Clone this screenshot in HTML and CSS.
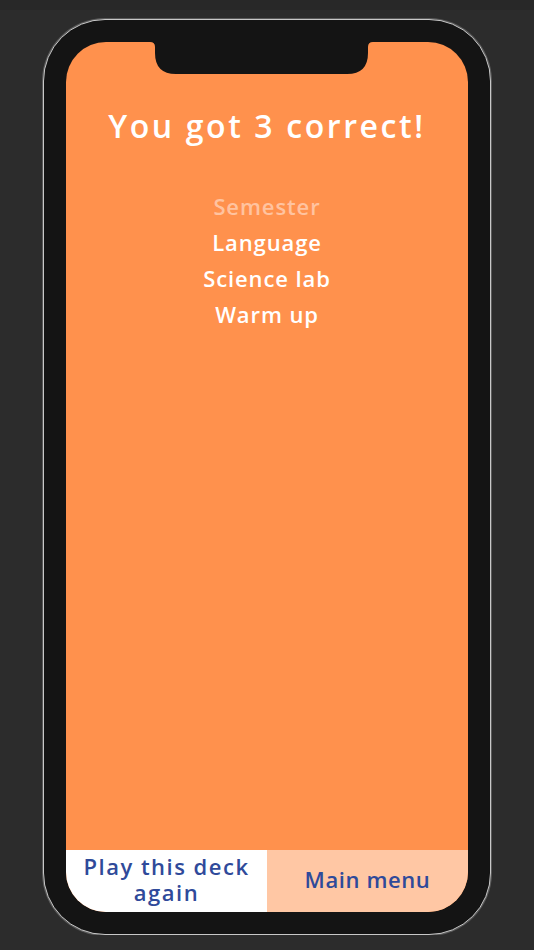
FILE: index.html
```html
<!DOCTYPE html>
<html>
<head>
  <title>Results</title>
  <link rel="stylesheet" href="styles.css">
</head>
<body>
  <div class="topbar"></div>
  <div id="phone">
    <div id="screen">
      <svg class="notch" width="223" height="33" viewBox="0 0 223 33">
        <path d="M0 0 H223 Q218 0 218 5 V11 Q218 32 197 32 H26 Q5 32 5 11 V5 Q5 0 0 0 Z" fill="#141414"/>
      </svg>
      <div class="results">
        <h1>You got 3 correct!</h1>
        <ul id="words">
          <li class="missed">Semester</li>
          <li>Language</li>
          <li>Science lab</li>
          <li>Warm up</li>
        </ul>
      </div>
      <div id="actions">
        <button id="again">Play this deck again</button>
        <button id="menu">Main menu</button>
      </div>
    </div>
  </div>
</body>
</html>
```

FILE: styles.css
```css
body {
  margin: 0;
  background-color: #2c2c2c;
  font-family: "Open Sans", "DejaVu Sans", sans-serif;
}

.topbar {
  height: 10px;
  background-color: #282828;
}

#phone {
  margin: 9px 0 0 43px;
  padding: 22px;
  box-sizing: border-box;
  width: 448px;
  height: 916px;
  background-color: #141414;
  border: 1px solid #c8c8c8;
  border-radius: 62px;
  box-shadow: 0 0 0 1px #5a5a5a;
}

#screen {
  position: relative;
  height: 100%;
  background-color: #ff914d;
  border-radius: 40px;
  overflow: hidden;
  display: flex;
  flex-direction: column;
}

.notch {
  position: absolute;
  top: 0;
  left: 84px;
}

.results {
  flex: 1;
  text-align: center;
}

h1 {
  margin: 62px 0 0;
  color: #fff;
  font-size: 32px;
  font-weight: 600;
  line-height: 44px;
  letter-spacing: 2.6px;
}

#words {
  list-style: none;
  margin: 40px 0 0;
  padding: 0;
}

#words li {
  color: #fff;
  font-size: 22px;
  font-weight: 600;
  line-height: 36px;
  letter-spacing: 0.9px;
}

#words li.missed {
  color: #ffc3a0;
}

#actions {
  display: flex;
  height: 62px;
}

#actions button {
  flex: 1;
  margin: 0;
  border: none;
  padding: 0 6px 5px;
  font-family: inherit;
  font-size: 22px;
  font-weight: 600;
  line-height: 26px;
  letter-spacing: 1.5px;
  color: #2f4a9a;
  cursor: pointer;
}

#again {
  background-color: #fff;
}

#actions #menu {
  background-color: #ffc7a4;
  letter-spacing: 0.6px;
}
```
